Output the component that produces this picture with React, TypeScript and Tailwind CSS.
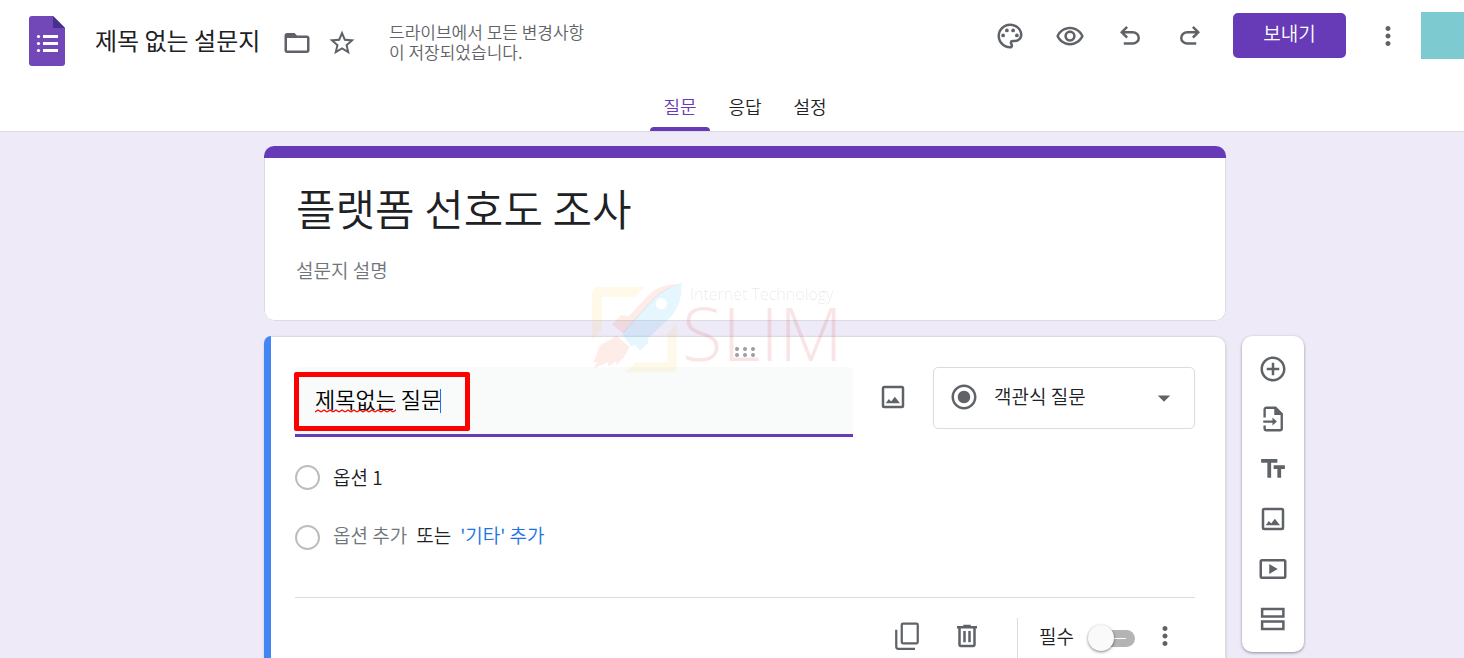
import { useState } from 'react';
import type { ReactNode } from 'react';

interface IconProps {
  children: ReactNode;
}

function Icon({ children }: IconProps) {
  return (
    <svg viewBox="0 0 24 24" className="w-[30px] h-[30px] shrink-0" fill="currentColor" aria-hidden="true">
      {children}
    </svg>
  );
}

const ICONS = {
  folder: (
    <path d="M20 6h-8l-2-2H4c-1.1 0-1.99.9-1.99 2L2 18c0 1.1.9 2 2 2h16c1.1 0 2-.9 2-2V8c0-1.1-.9-2-2-2zm0 12H4V8h16v10z" />
  ),
  star: (
    <path d="M22 9.24l-7.19-.62L12 2 9.19 8.63 2 9.24l5.46 4.73L5.82 21 12 17.27 18.18 21l-1.63-7.03L22 9.24zM12 15.4l-3.76 2.27 1-4.28-3.32-2.88 4.38-.38L12 6.1l1.71 4.04 4.38.38-3.32 2.88 1 4.28L12 15.4z" />
  ),
  palette: (
    <>
      <path d="M12 22C6.49 22 2 17.51 2 12S6.49 2 12 2s10 4.04 10 9c0 3.31-2.69 6-6 6h-1.77c-.28 0-.5.22-.5.5 0 .12.05.23.13.33.41.47.64 1.06.64 1.67A2.5 2.5 0 0 1 12 22zm0-18c-4.41 0-8 3.59-8 8s3.59 8 8 8c.28 0 .5-.22.5-.5a.54.54 0 0 0-.14-.35c-.41-.46-.63-1.05-.63-1.65a2.5 2.5 0 0 1 2.5-2.5H16c2.21 0 4-1.79 4-4 0-3.86-3.59-7-8-7z" />
      <circle cx="6.5" cy="11.5" r="1.5" />
      <circle cx="9.5" cy="7.5" r="1.5" />
      <circle cx="14.5" cy="7.5" r="1.5" />
      <circle cx="17.5" cy="11.5" r="1.5" />
    </>
  ),
  eye: (
    <path d="M12 6.5c3.79 0 7.17 2.13 8.82 5.5-1.65 3.37-5.02 5.5-8.82 5.5S4.83 15.37 3.18 12C4.83 8.63 8.21 6.5 12 6.5m0-2C7 4.5 2.73 7.61 1 12c1.73 4.39 6 7.5 11 7.5s9.27-3.11 11-7.5c-1.73-4.39-6-7.5-11-7.5zm0 5a2.5 2.5 0 0 1 0 5 2.5 2.5 0 0 1 0-5m0-2c-2.48 0-4.5 2.02-4.5 4.5s2.02 4.5 4.5 4.5 4.5-2.02 4.5-4.5-2.02-4.5-4.5-4.5z" />
  ),
  undo: (
    <path d="M7 19v-2h7.1q1.575 0 2.738-1T18 13.5q0-1.5-1.162-2.5T14.1 10H7.8l2.6 2.6L9 14 4 9l5-5 1.4 1.4L7.8 8h6.3q2.425 0 4.163 1.575T20 13.5q0 2.35-1.737 3.925T14.1 19H7z" />
  ),
  redo: (
    <path d="M17 19v-2H9.9q-1.575 0-2.738-1T6 13.5q0-1.5 1.162-2.5T9.9 10h6.3l-2.6 2.6L15 14l5-5-5-5-1.4 1.4L16.2 8H9.9q-2.425 0-4.163 1.575T4 13.5q0 2.35 1.737 3.925T9.9 19H17z" />
  ),
  more: (
    <path d="M12 8c1.1 0 2-.9 2-2s-.9-2-2-2-2 .9-2 2 .9 2 2 2zm0 2c-1.1 0-2 .9-2 2s.9 2 2 2 2-.9 2-2-.9-2-2-2zm0 6c-1.1 0-2 .9-2 2s.9 2 2 2 2-.9 2-2-.9-2-2-2z" />
  ),
  image: (
    <>
      <rect x="4" y="4" width="16" height="16" rx="1" fill="none" stroke="currentColor" strokeWidth="2" />
      <path d="M6.2 17l2.5-3.5 1.8 2.1 3-3.8L17.6 17z" />
    </>
  ),
  radio: (
    <path d="M12 7c-2.76 0-5 2.24-5 5s2.24 5 5 5 5-2.24 5-5-2.24-5-5-5zm0-5C6.48 2 2 6.48 2 12s4.48 10 10 10 10-4.48 10-10S17.52 2 12 2zm0 18c-4.42 0-8-3.58-8-8s3.58-8 8-8 8 3.58 8 8-3.58 8-8 8z" />
  ),
  arrow: <path d="M7 10l5 5 5-5z" />,
  addCircle: (
    <path d="M13 7h-2v4H7v2h4v4h2v-4h4v-2h-4V7zm-1-5C6.48 2 2 6.48 2 12s4.48 10 10 10 10-4.48 10-10S17.52 2 12 2zm0 18c-4.41 0-8-3.59-8-8s3.59-8 8-8 8 3.59 8 8-3.59 8-8 8z" />
  ),
  importFile: (
    <>
      <path
        d="M5.3 10.8V4.5A1.4 1.4 0 0 1 6.7 3H14l5 5v11.6a1.4 1.4 0 0 1-1.4 1.4H6.7a1.4 1.4 0 0 1-1.4-1.4v-2.4"
        fill="none"
        stroke="currentColor"
        strokeWidth="1.9"
      />
      <path d="M13 2.5v6.3h6.5zM4.2 13.1h7.4v-2.3l3.5 3.2-3.5 3.2v-2.3H4.2z" />
    </>
  ),
  text: <path d="M2.5 4v3h5v12h3V7h5V4h-13zm19 5h-9v3h3v7h3v-7h3V9z" />,
  video: (
    <>
      <rect x="2.2" y="5" width="19.6" height="14" rx="1" fill="none" stroke="currentColor" strokeWidth="2" />
      <path d="M9 8v8l6.8-4z" />
    </>
  ),
  section: (
    <g fill="none" stroke="currentColor" strokeWidth="2">
      <rect x="3.3" y="4" width="17" height="6" />
      <rect x="3.3" y="14" width="17" height="6" />
    </g>
  ),
  copy: (
    <g fill="none" stroke="currentColor" strokeWidth="1.8">
      <rect x="7.8" y="2" width="12.8" height="15.8" rx="1" />
      <path d="M3.4 7v13.6a1.6 1.6 0 0 0 1.6 1.6h13.4" />
    </g>
  ),
  trash: (
    <path d="M15 4V3H9v1H4v2h1v13c0 1.1.9 2 2 2h10c1.1 0 2-.9 2-2V6h1V4h-5zm2 15H7V6h10v13zM9 8h2v9H9zm4 0h2v9h-2z" />
  ),
};

const HEADER_ACTIONS = [
  { label: '테마 맞춤설정', icon: ICONS.palette },
  { label: '미리보기', icon: ICONS.eye },
  { label: '실행취소', icon: ICONS.undo },
  { label: '재실행', icon: ICONS.redo },
];

const TOOLS = [
  { label: '질문 추가', icon: ICONS.addCircle },
  { label: '질문 가져오기', icon: ICONS.importFile },
  { label: '제목 및 설명 추가', icon: ICONS.text },
  { label: '이미지 추가', icon: ICONS.image },
  { label: '동영상 추가', icon: ICONS.video },
  { label: '섹션 추가', icon: ICONS.section },
];

const TABS = ['질문', '응답', '설정'];

function FormsLogo() {
  return (
    <svg viewBox="0 0 36 50" className="w-9 h-[50px] shrink-0" role="img" aria-label="Forms">
      <path d="M3 0h21l12 12v35a3 3 0 0 1-3 3H3a3 3 0 0 1-3-3V3a3 3 0 0 1 3-3z" fill="#7248b9" />
      <path d="M24 0v12h12z" fill="#45318a" />
      <g fill="#fff">
        <circle cx="9.5" cy="20.5" r="1.6" />
        <circle cx="9.5" cy="27.5" r="1.6" />
        <circle cx="9.5" cy="34.5" r="1.6" />
        <path d="M14 19h15v3H14zM14 26h15v3H14zM14 33h15v3H14z" />
      </g>
    </svg>
  );
}

function Header() {
  const [tab, setTab] = useState(TABS[0]);

  return (
    <header className="bg-white border-b border-[#dadce0]">
      <div className="flex h-[85px] items-center justify-between">
        <div className="flex items-center pl-[29px] text-[#5f6368]">
          <div className="flex items-center pb-1">
            <FormsLogo />
            <input
              aria-label="설문지 이름"
              defaultValue="제목 없는 설문지"
              className="ml-[30px] w-[170px] h-9 pb-[2px] text-[24px] font-normal text-[#202124] outline-none"
            />
          </div>
          <button aria-label="폴더로 이동" className="ml-[17px]">
            <Icon>{ICONS.folder}</Icon>
          </button>
          <button aria-label="별표" className="ml-[15px]">
            <Icon>{ICONS.star}</Icon>
          </button>
          <p className="ml-8 w-[200px] pb-[2px] text-[17px] leading-5">드라이브에서 모든 변경사항이 저장되었습니다.</p>
        </div>

        <div className="flex h-[71px] items-center self-start text-[#5f6368]">
          <div className="flex gap-[30px]">
            {HEADER_ACTIONS.map((action) => (
              <button key={action.label} aria-label={action.label}>
                <Icon>{action.icon}</Icon>
              </button>
            ))}
          </div>
          <button className="ml-7 w-[113px] h-[45px] pb-1 rounded-[5px] bg-[#673ab7] text-[19px] text-white">
            보내기
          </button>
          <button aria-label="더보기" className="ml-[27px]">
            <Icon>{ICONS.more}</Icon>
          </button>
          <button aria-label="계정" className="ml-[18px] w-[43px] h-[47px] bg-[#7ecad1]" />
        </div>
      </div>

      <nav className="flex justify-center gap-[5px] pl-[26px]">
        {TABS.map((name) => (
          <button
            key={name}
            onClick={() => setTab(name)}
            className={`flex flex-col w-[60px] h-[46px] text-[18px] ${
              name === tab ? 'text-[#673ab7]' : 'text-[#202124]'
            }`}
          >
            <span className="w-full leading-[42px]">{name}</span>
            {name === tab && <span className="w-full h-1 rounded-t-[4px] bg-[#673ab7]" />}
          </button>
        ))}
      </nav>
    </header>
  );
}

function TitleCard() {
  return (
    <section className="col-start-2 overflow-hidden rounded-[10px] bg-white">
      <div className="h-3 bg-[#673ab7]" />
      <div className="px-[31px] pt-4 pb-9 border border-t-0 border-[#dadce0] rounded-b-[10px]">
        <input
          aria-label="설문지 제목"
          defaultValue="플랫폼 선호도 조사"
          className="block w-full h-[66px] text-[43px] text-[#202124] outline-none"
        />
        <input
          aria-label="설문지 설명"
          placeholder="설문지 설명"
          className="block w-full h-[30px] mt-[14px] text-[19px] placeholder:text-[#70757a] outline-none"
        />
      </div>
    </section>
  );
}

function Watermark() {
  return (
    <div
      aria-hidden="true"
      className="absolute z-10 -top-[61px] left-[316px] flex pointer-events-none font-['Open_Sans',sans-serif] font-light"
    >
      <svg viewBox="0 0 330 300" className="w-[110px] h-[100px]">
        <g fill="#ffc107" opacity="0.08">
          <path d="M36 195V54q0-18 18-18h141l-32 30H66v99z" />
          <path d="M290 145v129q0 18-18 18H137l30-30h95v-87z" />
        </g>
        <g fill="#f4511e" opacity="0.1">
          <path d="M146 124l62-66q36-34 88-30-40 14-74 44l-92 104-34-28 28-28z" />
          <path d="M110 183l38 32-16 32-24 24 2-14-26 18 2-14-44 18 10-18-12 2 20-52z" />
        </g>
        <path
          d="M308 22l-4 10q4 52-32 94l-68 64v14l-24 24-14-18-12 4-26-34 4-12 90-100q34-30 74-40z"
          fill="#29b6f6"
          opacity="0.12"
        />
        <circle cx="244" cy="86" r="17" fill="#fff" />
      </svg>
      <div className="-ml-2 pt-2">
        <p className="pl-2 text-[16px] leading-[22px] text-black/10">Internet Technology</p>
        <p className="text-[74px] leading-[56px] text-[#d9534f]/15">SLIM</p>
      </div>
    </div>
  );
}

function QuestionField() {
  return (
    <div className="relative flex-1">
      <input
        aria-label="질문"
        defaultValue="제목없는 질문"
        className="block w-full h-[70px] pl-5 pb-[6px] rounded-t-[5px] border-b-3 border-[#673ab7] bg-[#f9fafa] text-[22px] text-black outline-none"
      />
      <svg className="absolute top-[42px] left-5 w-[81px] h-1" aria-hidden="true">
        <defs>
          <pattern id="squiggle" width="6" height="4" patternUnits="userSpaceOnUse">
            <path d="M0 3l3-2 3 2" fill="none" stroke="#f00" strokeWidth="1.3" />
          </pattern>
        </defs>
        <rect width="81" height="4" fill="url(#squiggle)" />
      </svg>
      <span className="absolute top-[22px] left-[145px] w-px h-6 bg-[#1a73e8]" />
      <span className="absolute top-[5px] -left-px w-[176px] h-[59px] border-5 border-[#f00] rounded-[2px] pointer-events-none" />
    </div>
  );
}

function QuestionCard() {
  const [required, setRequired] = useState(false);

  return (
    <section className="relative col-start-2 flex rounded-[10px] bg-white shadow-[0_1px_3px_rgba(0,0,0,0.15)]">
      <Watermark />
      <div className="w-[7px] shrink-0 rounded-l-[10px] bg-[#4285f4]" />
      <div className="flex-1 pl-6 pr-[30px] pb-6 border-t border-r border-[#dadce0] rounded-tr-[10px]">
        <div className="flex h-[30px] items-center justify-center text-[#9a9fa5]">
          <svg viewBox="0 0 20 10" className="w-5 h-[10px]" fill="currentColor" aria-hidden="true">
            <circle cx="2" cy="2" r="2" />
            <circle cx="10" cy="2" r="2" />
            <circle cx="18" cy="2" r="2" />
            <circle cx="2" cy="8" r="2" />
            <circle cx="10" cy="8" r="2" />
            <circle cx="18" cy="8" r="2" />
          </svg>
        </div>

        <div className="flex items-start gap-[25px] text-[#5f6368]">
          <QuestionField />
          <button aria-label="이미지 추가" className="flex h-[60px] items-center">
            <Icon>{ICONS.image}</Icon>
          </button>
          <div className="relative w-[262px]">
            <span className="absolute top-[15px] left-4 pointer-events-none">
              <Icon>{ICONS.radio}</Icon>
            </span>
            <select
              aria-label="질문 유형"
              className="w-full h-[62px] pl-[60px] pb-1 appearance-none rounded-[5px] border border-[#dadce0] text-[19px] text-[#202124]"
            >
              <option>객관식 질문</option>
            </select>
            <span className="absolute top-4 right-4 pointer-events-none">
              <Icon>{ICONS.arrow}</Icon>
            </span>
          </div>
        </div>

        <div className="mt-[10px] text-[19px] text-[#202124]">
          <div className="flex h-[60px] items-center gap-[13px]">
            <input
              type="radio"
              disabled
              aria-label="옵션 1"
              className="w-[25px] h-[25px] shrink-0 appearance-none rounded-full border-2 border-[#bdbdbd]"
            />
            <input aria-label="옵션 이름" defaultValue="옵션 1" className="flex-1 h-8 pb-[2px] outline-none" />
          </div>
          <div className="flex h-[60px] items-center gap-[13px]">
            <input
              type="radio"
              disabled
              aria-label="새 옵션"
              className="w-[25px] h-[25px] shrink-0 appearance-none rounded-full border-2 border-[#bdbdbd]"
            />
            <div className="flex gap-[9px] pb-1 leading-7">
              <button className="text-[#70757a]">옵션 추가</button>
              <span>또는</span>
              <button className="text-[#1a73e8]">'기타' 추가</button>
            </div>
          </div>
        </div>

        <div className="flex items-start justify-end mt-[30px] pt-5 pr-[15px] border-t border-[#dadce0] text-[#5f6368]">
          <button aria-label="복사" className="flex h-9 items-center">
            <Icon>{ICONS.copy}</Icon>
          </button>
          <button aria-label="삭제" className="flex h-9 items-center ml-[30px]">
            <Icon>{ICONS.trash}</Icon>
          </button>
          <div className="w-px h-10 ml-[35px] bg-[#dadce0]" />
          <label className="flex h-9 items-center gap-[14px] ml-[21px] text-[19px] text-[#202124]">
            필수
            <input
              type="checkbox"
              role="switch"
              className="sr-only"
              checked={required}
              onChange={(e) => setRequired(e.target.checked)}
            />
            <span className={`flex w-[47px] items-center pt-1 ${required ? 'flex-row-reverse' : ''}`}>
              <span className="relative z-1 w-[26px] h-[26px] rounded-full bg-[#fafafa] shadow-[0_1px_3px_rgba(0,0,0,0.5)]" />
              <span className="flex flex-1 h-[17px] -ml-3 pl-3 items-center rounded-full bg-[#b4b4b4]">
                <span className="w-3 h-px bg-white" />
              </span>
            </span>
          </label>
          <button aria-label="옵션 더보기" className="flex h-9 items-center ml-[15px]">
            <Icon>{ICONS.more}</Icon>
          </button>
        </div>
      </div>
    </section>
  );
}

function Toolbar() {
  return (
    <aside className="flex flex-col w-[62px] self-start justify-self-start py-2 rounded-[10px] bg-white text-[#5f6368] shadow-[0_1px_3px_rgba(0,0,0,0.4)]">
      {TOOLS.map((tool) => (
        <button key={tool.label} aria-label={tool.label} className="flex h-[50px] items-center justify-center">
          <Icon>{tool.icon}</Icon>
        </button>
      ))}
    </aside>
  );
}

export default function App() {
  return (
    <div className="flex flex-col h-screen overflow-hidden bg-[#eeeaf8] font-['Noto_Sans_CJK_KR',sans-serif] font-[350]">
      <Header />
      <main className="grid grid-cols-[1fr_minmax(0,962px)_1fr] gap-x-4 gap-y-[15px] pt-[14px] pl-[26px]">
        <TitleCard />
        <QuestionCard />
        <Toolbar />
      </main>
    </div>
  );
}
